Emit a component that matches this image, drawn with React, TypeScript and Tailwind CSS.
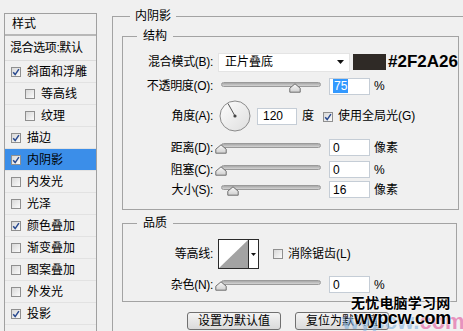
import React from "react";

interface ICheck {
  checked?: boolean;
}

function Check({ checked }: ICheck) {
  return (
    <span className="inline-flex h-[10px] w-[10px] shrink-0 items-center justify-center border border-[#8f8f8f] bg-linear-to-br from-[#d8d8d8] to-[#fbfbfb]">
      {checked && (
        <svg viewBox="0 0 8 8" className="h-[8px] w-[8px]">
          <path d="M1.2 4.2 L3.2 6.6 L6.9 1.2" stroke="#28498f" strokeWidth="1.5" fill="none" />
        </svg>
      )}
    </span>
  );
}

function Thumb() {
  return (
    <svg width="12" height="10" viewBox="0 0 12 10">
      <defs>
        <linearGradient id="tg" x1="0" y1="0" x2="0" y2="1">
          <stop offset="0" stopColor="#fafafa" />
          <stop offset="1" stopColor="#cfcfcf" />
        </linearGradient>
      </defs>
      <path d="M6 0.8 L11.2 5.2 L11.2 9.2 L0.8 9.2 L0.8 5.2 Z" fill="url(#tg)" stroke="#6e6e6e" strokeWidth="1" />
    </svg>
  );
}

function Slider({ pos }: { pos: number }) {
  return (
    <div className="relative ml-[8px] h-[17px] w-[100px] shrink-0">
      <div className="mt-[4px] h-[5px] rounded-full border border-[#9a9a9a] bg-linear-to-b from-[#a8a8a8] to-[#d4d4d4]"></div>
      <div className="absolute top-[5px]" style={{ left: pos - 6 }}>
        <Thumb />
      </div>
    </div>
  );
}

function Field({ value, selected }: { value: string; selected?: boolean }) {
  return (
    <div className="ml-[8px] flex h-[17px] w-[41px] shrink-0 items-center border border-[#c5cdd6] bg-white pl-[3px] text-[12px] leading-[14px]">
      {selected ? <span className="bg-[#3399ff] px-[1px] text-white">{value}</span> : <span>{value}</span>}
    </div>
  );
}

function Label({ text }: { text: string }) {
  return <div className="w-[90px] shrink-0 text-right text-[12px] leading-[16px] tracking-[-0.3px]">{text}</div>;
}

const layers = [
  { t: "斜面和浮雕", c: true },
  { t: "等高线", c: false, sub: true },
  { t: "纹理", c: false, sub: true },
  { t: "描边", c: true },
  { t: "内阴影", c: true, on: true },
  { t: "内发光", c: false },
  { t: "光泽", c: false },
  { t: "颜色叠加", c: true },
  { t: "渐变叠加", c: false },
  { t: "图案叠加", c: false },
  { t: "外发光", c: false },
  { t: "投影", c: true },
];

export default function App() {
  return (
    <div className="relative flex h-[331px] w-[463px] items-start overflow-hidden bg-[#f0f0f0] font-['Liberation_Sans','Noto_Sans_CJK_SC',sans-serif] text-black">
      {/* styles list */}
      <div className="ml-[4px] mt-[13px] h-[330px] w-[93px] shrink-0 border border-[#a0a0a0] text-[12px] leading-[16px]">
        <div className="flex h-[22px] items-center border-b-2 border-[#b8b8b8] pl-[7px]">样式</div>
        <div className="flex h-[25px] items-center border-b border-[#dcdcdc] pl-[5px] tracking-[-0.4px]">混合选项:默认</div>
        {layers.map((l) => (
          <div
            key={l.t}
            className={
              "flex h-[22px] items-center gap-[6px] border-b border-[#e2e2e2] " +
              (l.sub ? "pl-[20px] " : "pl-[6px] ") +
              (l.on ? "bg-[#3b8ee9]" : "")
            }
          >
            <Check checked={l.c} />
            <span>{l.t}</span>
          </div>
        ))}
      </div>

      {/* inner shadow group */}
      <fieldset className="ml-[15px] mt-[8px] h-[340px] w-[360px] shrink-0 border border-[#a3a3a3]">
        <legend className="ml-[17px] px-[5px] text-[12px] leading-[16px]">内阴影</legend>
        <div className="pl-[9px]">
          <fieldset className="mt-[4px] w-[336px] border border-[#a3a3a3] pb-[11px]">
            <legend className="ml-[14px] px-[6px] text-[12px] leading-[16px]">结构</legend>
            <div className="mt-[8px] flex h-[20px] items-center">
              <Label text="混合模式(B):" />
              <div className="ml-[5px] flex h-[19px] w-[132px] items-center justify-between border border-[#e4e4e4] bg-white pl-[6px] pr-[5px] text-[12px]">
                <span>正片叠底</span>
                <svg width="7" height="4" viewBox="0 0 7 4">
                  <path d="M0 0 H7 L3.5 4 Z" fill="#111" />
                </svg>
              </div>
              <div className="ml-[3px] h-[16px] w-[33px] bg-[#2F2A26]"></div>
              <span className="ml-[2px] font-['Liberation_Sans',sans-serif] text-[17px] font-bold leading-[18px]">#2F2A26</span>
            </div>
            <div className="mt-[5px] flex h-[18px] items-center">
              <Label text="不透明度(O):" />
              <Slider pos={74} />
              <Field value="75" selected />
              <span className="ml-[4px] text-[12px]">%</span>
            </div>
            <div className="mt-[5px] flex h-[32px] items-center">
              <Label text="角度(A):" />
              <svg className="ml-[5px] shrink-0" width="34" height="32" viewBox="0 0 34 32">
                <defs>
                  <linearGradient id="dg" x1="0" y1="0" x2="1" y2="1">
                    <stop offset="0" stopColor="#fdfdfd" />
                    <stop offset="1" stopColor="#dedede" />
                  </linearGradient>
                </defs>
                <circle cx="17" cy="16" r="15" fill="url(#dg)" stroke="#8a8a8a" strokeWidth="1" />
                <line x1="17" y1="16" x2="10" y2="3.5" stroke="#555" strokeWidth="1" />
                <circle cx="17" cy="16" r="1.6" fill="#444" />
              </svg>
              <div className="ml-[5px] flex h-[17px] w-[40px] items-center border border-[#c5cdd6] bg-white pl-[5px] text-[12px]">120</div>
              <span className="ml-[5px] text-[12px]">度</span>
              <span className="ml-[9px]">
                <Check checked />
              </span>
              <span className="ml-[5px] text-[12px] leading-[16px]">使用全局光(G)</span>
            </div>
            <div className="mt-[7px] flex h-[17px] items-center">
              <Label text="距离(D):" />
              <Slider pos={0} />
              <Field value="0" />
              <span className="ml-[4px] text-[12px]">像素</span>
            </div>
            <div className="mt-[5px] flex h-[17px] items-center">
              <Label text="阻塞(C):" />
              <Slider pos={0} />
              <Field value="0" />
              <span className="ml-[4px] text-[12px]">%</span>
            </div>
            <div className="mt-[3px] flex h-[17px] items-center">
              <Label text="大小(S):" />
              <Slider pos={12} />
              <Field value="16" />
              <span className="ml-[4px] text-[12px]">像素</span>
            </div>
          </fieldset>

          <fieldset className="mt-[5px] w-[335px] border border-[#a3a3a3] pb-[8px]">
            <legend className="ml-[14px] px-[6px] text-[12px] leading-[16px]">品质</legend>
            <div className="mt-[8px] flex h-[30px] items-center">
              <Label text="等高线:" />
              <div className="ml-[5px] flex h-[30px] w-[41px] border border-[#2a2a2a] bg-white">
                <svg width="29" height="28" viewBox="0 0 29 28">
                  <path d="M0 28 L29 0 L29 28 Z" fill="#a3a3a3" />
                </svg>
                <div className="flex flex-1 items-center justify-center border-l border-[#2a2a2a]">
                  <svg width="5" height="3" viewBox="0 0 5 3">
                    <path d="M0 0 H5 L2.5 3 Z" fill="#111" />
                  </svg>
                </div>
              </div>
              <span className="ml-[14px]">
                <Check />
              </span>
              <span className="ml-[5px] text-[12px] leading-[16px]">消除锯齿(L)</span>
            </div>
            <div className="mt-[7px] flex h-[17px] items-center">
              <Label text="杂色(N):" />
              <Slider pos={0} />
              <Field value="0" />
              <span className="ml-[4px] text-[12px]">%</span>
            </div>
          </fieldset>

          <div className="ml-[65px] mt-[10px] flex gap-[14px]">
            <button className="h-[18px] w-[94px] rounded-[3px] border border-[#707070] bg-linear-to-b from-[#f4f4f4] to-[#dadada] text-[12px] leading-[14px]">
              设置为默认值
            </button>
            <button className="h-[18px] w-[94px] rounded-[3px] border border-[#707070] bg-linear-to-b from-[#f4f4f4] to-[#dadada] text-[12px] leading-[14px]">
              复位为默认值
            </button>
          </div>
        </div>
      </fieldset>

      {/* watermark */}
      <div className="absolute left-[342px] top-[311px] font-['Liberation_Sans',sans-serif] text-[22px] font-bold leading-[22px] opacity-60">
        <span className="text-[#7fb0e0]">wypcw.</span>
        <span className="text-[#e2559c]">com</span>
      </div>
      <div className="absolute left-[351px] top-[295px] flex flex-col items-start">
        <span className="text-[14px] font-bold leading-[16px] tracking-[0.2px] [text-shadow:0_0_2px_#fff,0_0_2px_#fff]">无忧电脑学习网</span>
        <span className="-mt-[2px] ml-[3px] font-['Liberation_Sans',sans-serif] text-[18px] font-bold leading-[18px] tracking-[-0.4px] [text-shadow:0_0_2px_#fff,0_0_2px_#fff]">
          wypcw.com
        </span>
      </div>
    </div>
  );
}
